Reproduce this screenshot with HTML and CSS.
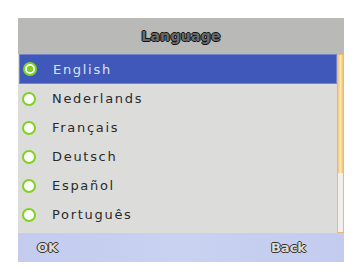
FILE: index.html
```html
<!DOCTYPE html>
<html lang="en">
<head>
  <meta charset="UTF-8" />
  <title>Language</title>
  <link rel="stylesheet" href="styles.css">
</head>
<body>
  <div class="screen">
    <div class="header">Language</div>
    <div class="content">
      <ul class="list">
        <li class="row selected"><span class="radio"></span>English</li>
        <li class="row"><span class="radio"></span>Nederlands</li>
        <li class="row"><span class="radio"></span>Français</li>
        <li class="row"><span class="radio"></span>Deutsch</li>
        <li class="row"><span class="radio"></span>Español</li>
        <li class="row"><span class="radio"></span>Português</li>
      </ul>
      <div class="scrollbar">
        <div class="thumb"></div>
      </div>
    </div>
    <div class="footer">
      <span class="softkey">OK</span>
      <span class="softkey">Back</span>
    </div>
  </div>
</body>
</html>
```

FILE: styles.css
```css
body {
  margin: 0;
  background: #fff;
  font-family: "DejaVu Sans", Verdana, sans-serif;
}
.screen {
  margin: 18px 0 0 18px;
  width: 326px;
  height: 244px;
  display: flex;
  flex-direction: column;
}
.header {
  height: 36px;
  background: #b9bab7;
  display: flex;
  align-items: center;
  justify-content: center;
  font-size: 14px;
  font-weight: bold;
  color: #6a6a6a;
  text-shadow: -1px 0 #111, 1px 0 #111, 0 -1px #111, 0 1px #111;
  letter-spacing: 0.3px;
}
.content {
  flex: 1;
  display: flex;
  background: #dcdddb;
}
.list {
  list-style: none;
  margin: 0;
  padding: 0;
  flex: 1;
}
.row {
  height: 29px;
  display: flex;
  align-items: center;
  font-size: 13px;
  letter-spacing: 1.7px;
  color: #2a2a2a;
  box-sizing: border-box;
}
.row.selected {
  background: #3f58ba;
  border: 1px solid #7585cc;
  margin-left: 1px;
  color: #dfe3f7;
  height: 30px;
}
.radio {
  width: 10px;
  height: 10px;
  border: 2.5px solid #7ed321;
  border-radius: 50%;
  background: #fff;
  margin: 0 16px 0 4px;
  flex-shrink: 0;
}
.selected .radio {
  margin-left: 3px;
  background: radial-gradient(circle, #7ed321 0 3px, #fff 3.5px);
}
.scrollbar {
  width: 7px;
  display: flex;
  flex-direction: column;
  background: #f3efeb;
  border: 1px solid #efb67a;
  box-sizing: border-box;
}
.thumb {
  height: 118px;
  background: linear-gradient(to right, #f4c583, #fbe7a6 50%, #f2c07c);
}
.footer {
  height: 29px;
  background: linear-gradient(to right, #c3cbef, #cad2f2 50%, #c3cbef);
  display: flex;
  align-items: center;
  justify-content: space-between;
  padding: 0 38px 0 19px;
}
.softkey {
  font-size: 13px;
  font-weight: bold;
  color: #ddd;
  text-shadow: -1px 0 #333, 1px 0 #333, 0 -1px #333, 0 1px #333;
}
```
